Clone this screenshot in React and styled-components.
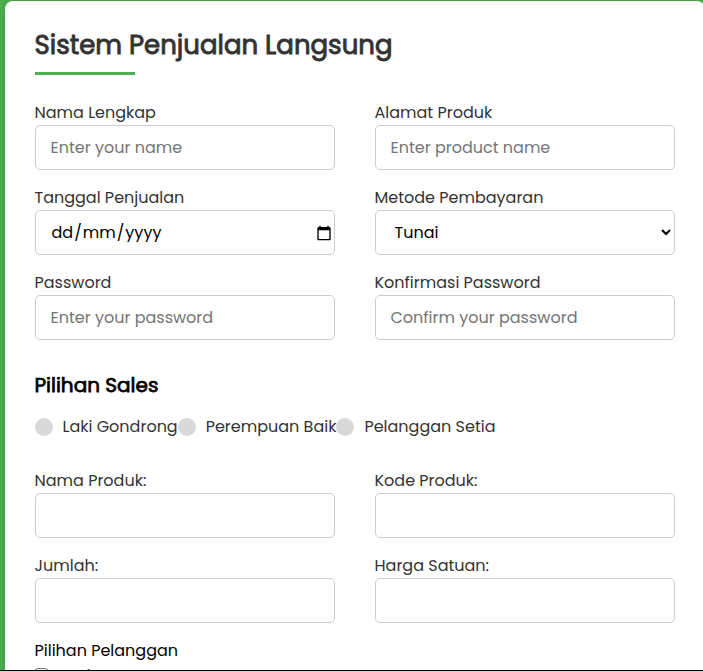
import React from "react";
import styled, { createGlobalStyle } from "styled-components";

const GlobalStyle = createGlobalStyle`
  *, *::before, *::after { box-sizing: border-box; }
  body {
    margin: 0;
    background: #4caf50;
    font-family: Poppins, Inter, sans-serif;
    font-size: 16px;
    font-feature-settings: "cv11" 1;
    overflow: hidden;
  }
`;

const Page = styled.main`
  height: 671px;
  padding: 1px 0 0 4.5px;
  overflow: hidden;
  border-bottom: 1px solid #000;
`;

const Card = styled.form`
  width: 700px;
  height: 900px;
  padding: 25px 30px;
  background: #fff;
  border-radius: 8px;
  box-shadow: 0 0 10px rgba(0, 0, 0, 0.15);
`;

const Title = styled.h1`
  margin: 0;
  height: 49px;
  font-size: 26px;
  font-weight: 400;
  -webkit-text-stroke: 0.9px currentColor;
  line-height: 39px;
  color: #333;
  white-space: nowrap;

  &::after {
    content: "";
    display: block;
    width: 100px;
    height: 3px;
    margin-top: 7px;
    background: #4caf50;
  }
`;

const FieldGrid = styled.div`
  display: grid;
  grid-template-columns: 300px 300px;
  gap: 16px 40px;
  margin-top: ${(p) => p.$top}px;
`;

const Field = styled.label`
  display: block;
  height: 69px;
  line-height: 24px;
  color: #333;
`;

const Control = styled.input`
  display: block;
  width: 300px;
  height: 45px;
  padding: 0 15px;
  border: 1px solid #ccc;
  border-radius: 5px;
  background: #fff;
  color: #000;
  font: inherit;
  font-feature-settings: inherit;
  outline: none;

  &::placeholder { color: #757575; opacity: 1; }
`;

const DateControl = styled.span`
  display: flex;
  align-items: center;
  justify-content: space-between;
  width: 300px;
  height: 45px;
  padding: 0 2px 0 16px;
  border: 1px solid #ccc;
  border-radius: 5px;
  color: #000;
`;

const Slash = styled.span`
  margin: 0 1px;
`;

const Heading = styled.h2`
  margin: 29px 0 0;
  font-size: 20px;
  font-weight: 400;
  -webkit-text-stroke: 0.75px currentColor;
  line-height: 32px;
  color: #000;
`;

const RadioRow = styled.div`
  display: flex;
  align-items: center;
  height: 24px;
  margin-top: 14px;
  color: #333;
`;

const Radio = styled.label`
  display: flex;
  align-items: center;
  flex: none;
  line-height: 24px;
  padding-bottom: 1px;
  white-space: nowrap;
`;

const Dot = styled.span`
  flex: none;
  width: 18px;
  height: 18px;
  margin: 1px 10px 0 0;
  border-radius: 50%;
  background: #d9d9d9;
`;

const GroupLabel = styled.p`
  margin: 16px 0 0;
  line-height: 24px;
  color: #000;
`;

const CheckRow = styled.label`
  display: flex;
  align-items: flex-start;
  height: 24px;
  line-height: 26px;
  color: #333;
`;

const CheckBox = styled.input`
  width: 13px;
  height: 13px;
  margin: 5px 2px 0 0;
`;

function CalendarIcon() {
  return (
    <svg width="16" height="16" viewBox="0 0 24 24" fill="#000">
      <path d="M20 3h-1V1h-2v2H7V1H5v2H4c-1.100 0-2 .9-2 2v16c0 1.100.9 2 2 2h16c1.100 0 2-.9 2-2V5c0-1.100-.9-2-2-2zm0 18H4V8h16v13z" />
    </svg>
  );
}

const people = ["Laki Gondrong", "Perempuan Baik", "Pelanggan Setia"];

function InputField({ label, hint, type = "text" }) {
  return (
    <Field>
      {label}
      <Control type={type} placeholder={hint} />
    </Field>
  );
}

export default function App() {
  return (
    <>
      <GlobalStyle />
      <Page>
        <Card>
          <Title>Sistem Penjualan Langsung</Title>
          <FieldGrid $top={26}>
            <InputField label="Nama Lengkap" hint="Enter your name" />
            <InputField label="Alamat Produk" hint="Enter product name" />
            <Field>
              Tanggal Penjualan
              <DateControl>
                <span>dd<Slash>/</Slash>mm<Slash>/</Slash>yyyy</span>
                <CalendarIcon />
              </DateControl>
            </Field>
            <Field>
              Metode Pembayaran
              <Control as="select" defaultValue="Tunai"><option>Tunai</option></Control>
            </Field>
            <InputField label="Password" hint="Enter your password" type="password" />
            <InputField label="Konfirmasi Password" hint="Confirm your password" type="password" />
          </FieldGrid>
          <Heading>Pilihan Sales</Heading>
          <RadioRow>
            {people.map((name) => (
              <Radio key={name}><Dot />{name}</Radio>
            ))}
          </RadioRow>
          <FieldGrid $top={30}>
            <InputField label="Nama Produk:" />
            <InputField label="Kode Produk:" />
            <InputField label="Jumlah:" />
            <InputField label="Harga Satuan:" />
          </FieldGrid>
          <GroupLabel>Pilihan Pelanggan</GroupLabel>
          <CheckRow><CheckBox type="checkbox" />Grosir</CheckRow>
        </Card>
      </Page>
    </>
  );
}
